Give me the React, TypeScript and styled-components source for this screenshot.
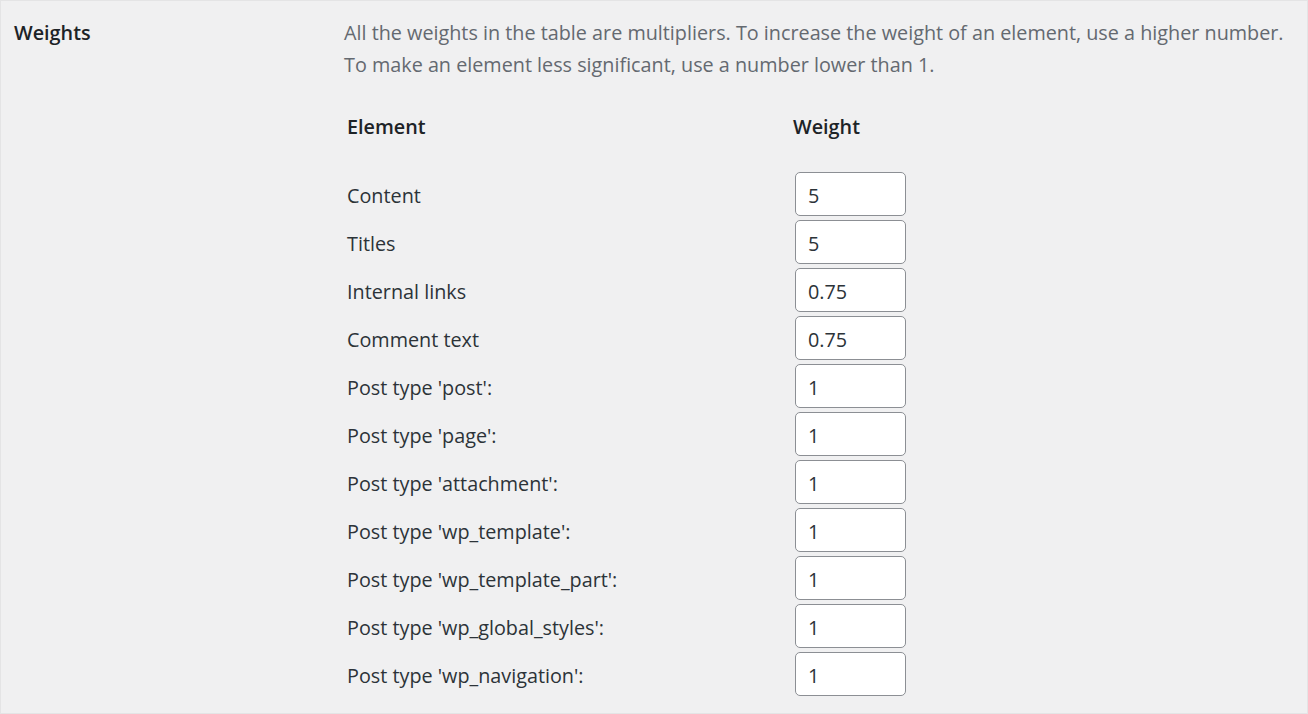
import styled, { createGlobalStyle } from "styled-components"

const GlobalStyle = createGlobalStyle`
    html, body {
        margin: 0;
        padding: 0;
        background: #f0f0f1;
    }
    body {
        font-family: "Open Sans", "Noto Sans", sans-serif;
        -webkit-font-smoothing: antialiased;
    }
`

const rows = [
    { label: "Content", value: "5" },
    { label: "Titles", value: "5" },
    { label: "Internal links", value: "0.75" },
    { label: "Comment text", value: "0.75" },
    { label: "Post type 'post':", value: "1" },
    { label: "Post type 'page':", value: "1" },
    { label: "Post type 'attachment':", value: "1" },
    { label: "Post type 'wp_template':", value: "1" },
    { label: "Post type 'wp_template_part':", value: "1" },
    { label: "Post type 'wp_global_styles':", value: "1" },
    { label: "Post type 'wp_navigation':", value: "1" },
]

export default function App() {
    return (
        <>
            <GlobalStyle />
            <StyledPage>
                <StyledSettingRow>
                    <StyledHeading>Weights</StyledHeading>
                    <StyledField>
                        <StyledDescription>
                            All the weights in the table are multipliers. To increase the weight of an element, use a higher number.
                            <br />
                            To make an element less significant, use a number lower than 1.
                        </StyledDescription>
                        <StyledTable>
                            <StyledHeadRow>
                                <StyledHeadCell>Element</StyledHeadCell>
                                <StyledHeadCell>Weight</StyledHeadCell>
                            </StyledHeadRow>
                            {rows.map((row) => (
                                <StyledRow key={row.label}>
                                    <StyledLabel>{row.label}</StyledLabel>
                                    <StyledInput type="text" defaultValue={row.value} />
                                </StyledRow>
                            ))}
                        </StyledTable>
                    </StyledField>
                </StyledSettingRow>
            </StyledPage>
        </>
    )
}

const StyledPage = styled.div`
    box-sizing: border-box;
    width: 100%;
    height: 714px;
    overflow: hidden;
    border: 1px solid #e4e4e5;
    background: #f0f0f1;
`

const StyledSettingRow = styled.div`
    display: flex;
    padding-top: 16px;
`

const StyledHeading = styled.div`
    width: 330px;
    padding-left: 13px;
    box-sizing: border-box;
    font-size: 19.8px;
    font-weight: 600;
    line-height: 32px;
    color: #1d2327;
`

const StyledField = styled.div`
    display: flex;
    flex-direction: column;
`

const StyledDescription = styled.p`
    margin: 0 0 21px 13px;
    font-size: 19.8px;
    line-height: 32px;
    color: #646970;
    white-space: nowrap;
`

const StyledTable = styled.div`
    display: grid;
    grid-template-columns: 446px 112px;
    padding-left: 16px;
`

const StyledHeadRow = styled.div`
    display: contents;
`

const StyledHeadCell = styled.div`
    height: 48px;
    margin-bottom: 20px;
    display: flex;
    align-items: center;
    font-size: 19.8px;
    font-weight: 600;
    color: #1d2327;
`

const StyledRow = styled.div`
    display: contents;
`

const StyledLabel = styled.div`
    height: 48px;
    display: flex;
    align-items: center;
    padding-top: 3px;
    box-sizing: border-box;
    font-size: 19.8px;
    color: #2c3338;
`

const StyledInput = styled.input`
    box-sizing: border-box;
    width: 111px;
    height: 44px;
    margin: 2px 0 2px 2px;
    padding: 2px 12px 0;
    border: 1px solid #8c8f94;
    border-radius: 5px;
    background: #ffffff;
    font-family: inherit;
    font-size: 19.8px;
    color: #2c3338;
    outline: none;
`
